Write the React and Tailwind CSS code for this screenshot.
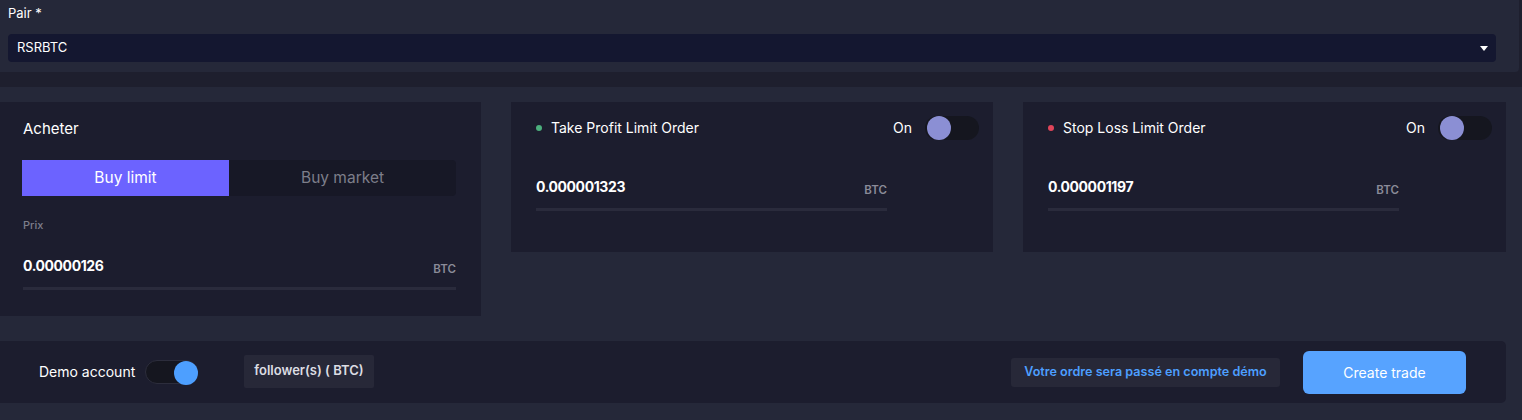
import React from "react";

function Switch({ on, knob, track, border, width }) {
  return (
    <div
      className={`relative h-[24px] ${width || "w-[54px]"} rounded-full ${track} ${border || ""}`}
    >
      <div
        className={`absolute top-0 h-[24px] w-[24px] rounded-full ${knob} ${on ? "-right-px -top-px" : "left-[2px]"}`}
      />
    </div>
  );
}

function PriceInput({ value, width }) {
  return (
    <div className={`${width}`}>
      <div className="flex items-end justify-between pb-[11px]">
        <span className="text-[14px] font-bold leading-[20px] tracking-[-0.4px] text-white">{value}</span>
        <span className="text-[11.5px] font-semibold leading-[14px] text-[#8a8b98]">BTC</span>
      </div>
      <div className="h-[3px] w-full bg-[#2a2b3c]" />
    </div>
  );
}

function OrderCard({ title, dot, value, width }) {
  return (
    <div className={`${width} h-[150px] bg-[#1c1d2e] pl-[25px] pr-[14px] pt-[14px]`}>
      <div className="flex items-center justify-between">
        <div className="flex items-center">
          <span className={`h-[6px] w-[6px] rounded-full ${dot}`} />
          <span className="ml-[9px] text-[14px] leading-[20px] text-white">{title}</span>
        </div>
        <div className="flex items-center gap-[13px]">
          <span className="text-[14px] leading-[20px] text-white">On</span>
          <Switch on={false} knob="bg-[#8b8fd4]" track="bg-[#15161f]" />
        </div>
      </div>
      <div className="mt-[37px]">
        <PriceInput value={value} width="w-[351px]" />
      </div>
    </div>
  );
}

export default function App() {
  return (
    <div
      className="h-[420px] w-[1522px] overflow-hidden bg-[#1e1f2e]"
      style={{ fontFamily: "Inter, 'Noto Sans', sans-serif" }}
    >
      {/* Top panel */}
      <div className="h-[72px] w-[1519px] rounded-br-[4px] bg-[#252839] pl-[8px] pr-[23px] pt-[5px]">
        <div className="text-[13px] leading-[16px] text-white">Pair *</div>
        <div className="mt-[13px] flex h-[28px] items-center justify-between rounded-[4px] bg-[#141730] pl-[9px] pr-[8px]">
          <span className="text-[13px] text-white">RSRBTC</span>
          <svg width="8" height="5" viewBox="0 0 8 5">
            <path d="M0 0 L8 0 L4 5 Z" fill="#ffffff" />
          </svg>
        </div>
      </div>

      {/* Lower section */}
      <div className="mt-[15px] h-[333px] bg-[#252839] pt-[15px]">
        <div className="flex items-start">
          {/* Left card */}
          <div className="h-[214px] w-[481px] bg-[#1c1d2e] pl-[22px] pt-[17px]">
            <div className="pl-[1px] text-[15px] leading-[20px] text-white">Acheter</div>
            <div className="mt-[21px] flex h-[36px] w-[434px]">
              <div className="flex w-[207px] items-center justify-center bg-[#6c63ff] text-[15.5px] text-white">
                Buy limit
              </div>
              <div className="flex flex-1 items-center justify-center rounded-r-[4px] bg-[#171826] text-[15.5px] text-[#7d7e8a]">
                Buy market
              </div>
            </div>
            <div className="mt-[22px] pl-[1px] text-[11px] font-medium leading-[14px] text-[#7d7e8a]">
              Prix
            </div>
            <div className="mt-[24px] pl-[1px]">
              <PriceInput value="0.00000126" width="w-[433px]" />
            </div>
          </div>

          <div className="ml-[30px]">
            <OrderCard
              title="Take Profit Limit Order"
              dot="bg-[#4caf7d]"
              value="0.000001323"
              width="w-[482px]"
            />
          </div>
          <div className="ml-[30px]">
            <OrderCard
              title="Stop Loss Limit Order"
              dot="bg-[#e0455a]"
              value="0.000001197"
              width="w-[483px]"
            />
          </div>
        </div>

        {/* Bottom bar */}
        <div className="mt-[25px] flex h-[62px] w-[1506px] items-center rounded-r-[5px] bg-[#1c1d2e] pl-[39px] pr-[40px]">
          <span className="text-[14px] leading-[20px] text-white">Demo account</span>
          <div className="ml-[10px]">
            <Switch
              on={true}
              knob="bg-[#4d9fff]"
              track="bg-[#15161f]"
              border="border border-[#2c2d3c]"
              width="w-[53px]"
            />
          </div>
          <div className="ml-[46px] flex h-[33px] -translate-y-[1px] items-center rounded-[2px] bg-[#272838] px-[10px] text-[13px] font-semibold text-[#dcdde3]">
            follower(s) ( BTC)
          </div>
          <div className="flex-1" />
          <div className="flex h-[29px] w-[269px] items-center justify-center rounded-[3px] bg-[#272838] text-[12.6px] font-semibold text-[#4d9fff]">
            Votre ordre sera passé en compte démo
          </div>
          <button className="ml-[23px] flex h-[43px] w-[163px] items-center justify-center rounded-[6px] bg-[#57a3ff] text-[14px] text-white">
            Create trade
          </button>
        </div>
      </div>
    </div>
  );
}
